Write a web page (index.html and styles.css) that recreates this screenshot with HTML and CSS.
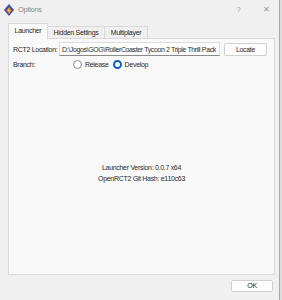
FILE: index.html
```html
<!DOCTYPE html>
<html>
<head>
<meta charset="utf-8">
<link rel="stylesheet" href="styles.css">
</head>
<body>
<div class="window">
  <div class="titlebar">
    <svg class="appicon" width="10" height="12" viewBox="0 0 10 12">
      <path d="M5 0 L10 6 L5 12 L0 6 Z" fill="#3a4fa8"/>
      <path d="M5 3 L7.5 6.5 L5 10 L2.5 6.5 Z" fill="#f08a1c"/>
      <path d="M5 5 L6 6.5 L5 8 L4 6.5 Z" fill="#ffd84a"/>
    </svg>
    <span class="title">Options</span>
    <span class="spacer"></span>
    <span class="tbtn help">?</span>
    <span class="tbtn close">✕</span>
  </div>
  <div class="tabs">
    <div class="tab active">Launcher</div>
    <div class="tab">Hidden Settings</div>
    <div class="tab">Multiplayer</div>
  </div>
  <div class="pane">
    <div class="row loc">
      <span class="label">RCT2 Location:</span>
      <div class="field">D:\Jogos\GOG\RollerCoaster Tycoon 2 Triple Thrill Pack</div>
      <div class="button locate">Locate</div>
    </div>
    <div class="row branch">
      <span class="label">Branch:</span>
      <span class="radio"></span><span class="rlabel">Release</span>
      <span class="radio checked"></span><span class="rlabel">Develop</span>
    </div>
    <div class="info">
      <div>Launcher Version: 0.0.7 x64</div>
      <div>OpenRCT2 Git Hash: e110c63</div>
    </div>
  </div>
  <div class="footer">
    <div class="button ok">OK</div>
  </div>
</div>
</body>
</html>
```

FILE: styles.css
```css
html, body {
  margin: 0;
  padding: 0;
}
body {
  width: 282px;
  height: 300px;
  background: #dcdcdc;
  font-family: "Liberation Sans", Arial, sans-serif;
  font-size: 7px;
  letter-spacing: -0.3px;
  color: #2a2a2a;
  overflow: hidden;
  white-space: nowrap;
}
.window {
  width: 280px;
  height: 300px;
  background: #f0f0f0;
  border-right: 1px solid #a8a8a8;
  box-sizing: border-box;
  display: flex;
  flex-direction: column;
}
.titlebar {
  height: 22px;
  display: flex;
  align-items: center;
  padding-left: 4px;
  padding-right: 9px;
  box-sizing: border-box;
}
.appicon {
  margin-top: -2px;
}
.title {
  margin-left: 4px;
  margin-top: -3px;
  font-size: 7.5px;
  color: #8a8a8a;
}
.spacer { flex: 1; }
.tbtn {
  color: #9a9a9a;
  margin-top: -3px;
}
.help { font-size: 7.5px; margin-right: 23px; }
.close { font-size: 8px; }
.tabs {
  display: flex;
  align-items: flex-end;
  padding-left: 8px;
  height: 16px;
}
.tab {
  height: 12px;
  line-height: 12px;
  border: 1px solid #d9d9d9;
  border-bottom: none;
  background: #f0f0f0;
  box-sizing: border-box;
  margin-left: -1px;
  text-align: center;
}
.tab:nth-child(1) { width: 40px; margin-left: 0; }
.tab:nth-child(2) { width: 58px; }
.tab:nth-child(3) { width: 44px; }
.tab.active {
  height: 16px;
  line-height: 14px;
  background: #f9f9f9;
  position: relative;
  z-index: 1;
  margin-bottom: -1px;
}
.pane {
  margin-left: 8px;
  width: 267px;
  height: 237px;
  box-sizing: border-box;
  background: #f9f9f9;
  border: 1px solid #dadada;
  display: flex;
  flex-direction: column;
  padding: 3px 7px 0 4px;
}
.row {
  display: flex;
  align-items: center;
}
.row.loc { height: 14px; }
.label { width: 46px; }
.field {
  width: 161px;
  height: 14px;
  line-height: 13px;
  box-sizing: border-box;
  background: #ffffff;
  border: 1px solid #dcdcdc;
  border-bottom-color: #8a8a8a;
  padding-left: 2px;
  overflow: hidden;
  letter-spacing: -0.38px;
}
.button {
  background: #fdfdfd;
  border: 1px solid #d0d0d0;
  border-radius: 2px;
  box-sizing: border-box;
  text-align: center;
}
.locate {
  margin-left: 4px;
  width: 43px;
  height: 13px;
  line-height: 11px;
}
.row.branch {
  margin-top: 1px;
  height: 14px;
}
.row.branch .label { width: 60px; }
.radio {
  width: 9px;
  height: 9px;
  border: 1px solid #8a8a8a;
  border-radius: 50%;
  box-sizing: border-box;
  background: #fff;
}
.radio.checked {
  border: 2.5px solid #0a5fc4;
  background: #ffffff;
}
.rlabel { margin-left: 3px; margin-right: 4px; }
.info {
  margin-top: 91px;
  text-align: center;
  line-height: 11px;
  padding-left: 3px;
}
.footer {
  display: flex;
  justify-content: flex-end;
  padding-right: 6px;
  padding-top: 5px;
}
.ok {
  width: 42px;
  height: 12px;
  line-height: 10px;
}
```
